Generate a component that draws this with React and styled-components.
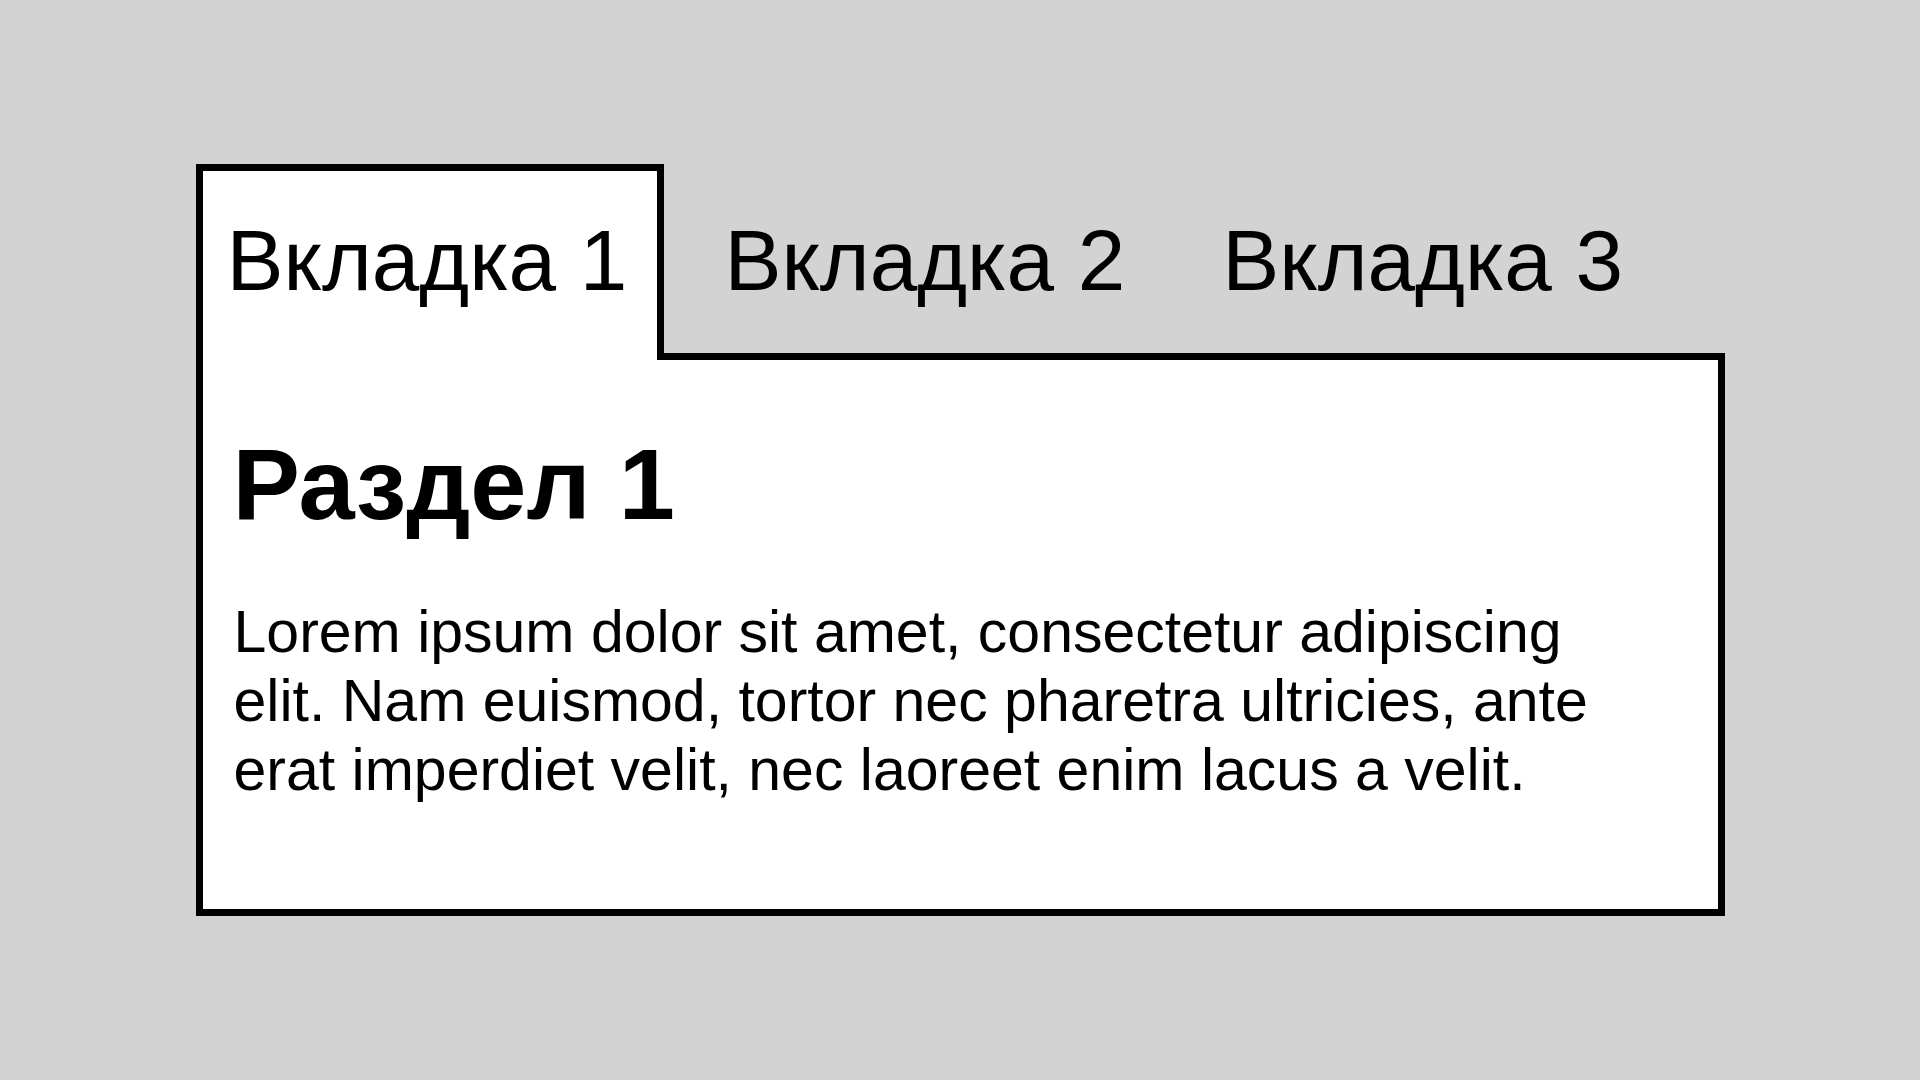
import { useState } from 'react';
import styled, { createGlobalStyle } from 'styled-components';

const GlobalStyle = createGlobalStyle`
  html, body {
    margin: 0;
    padding: 0;
  }
  body {
    background-color: #d3d3d3;
    color: #000;
    font-family: "Liberation Sans", Arial, sans-serif;
  }
`;

const Page = styled.div`
  min-height: 100vh;
  display: flex;
  align-items: center;
  justify-content: center;
`;

const Tabs = styled.div`
  width: 1529px;
`;

const TabList = styled.div`
  display: flex;
  align-items: flex-end;
  gap: 29px;
`;

const Tab = styled.button`
  position: relative;
  z-index: 1;
  margin: 0 0 -7px;
  padding: 41px 30px 49px 24px;
  font-family: inherit;
  font-size: 85.5px;
  line-height: 1.15;
  color: #000;
  cursor: pointer;
  border: 7px solid ${(p) => (p.$active ? '#000' : 'transparent')};
  border-bottom: 0;
  background-color: ${(p) => (p.$active ? '#fff' : 'transparent')};
`;

const Panel = styled.div`
  border: 7px solid #000;
  background-color: #fff;
  padding: 66px 30px 48px;
  h1 {
    margin: 0;
    font-size: 101px;
    font-weight: 700;
    line-height: 1.15;
  }
  p {
    max-width: 1400px;
    margin: 56px 0 56px 1px;
    font-size: 59px;
    line-height: 69px;
  }
`;

const tabs = ['Вкладка 1', 'Вкладка 2', 'Вкладка 3'];

const text =
  'Lorem ipsum dolor sit amet, consectetur adipiscing elit. Nam euismod, tortor nec pharetra ultricies, ante erat imperdiet velit, nec laoreet enim lacus a velit.';

function App() {
  const [active, setActive] = useState(0);
  return (
    <>
      <GlobalStyle />
      <Page>
        <Tabs>
          <TabList>
            {tabs.map((t, i) => (
              <Tab key={t} $active={active === i} onClick={() => setActive(i)}>
                {t}
              </Tab>
            ))}
          </TabList>
          <Panel>
            <h1>Раздел {active + 1}</h1>
            <p>{text}</p>
          </Panel>
        </Tabs>
      </Page>
    </>
  );
}

export default App;
